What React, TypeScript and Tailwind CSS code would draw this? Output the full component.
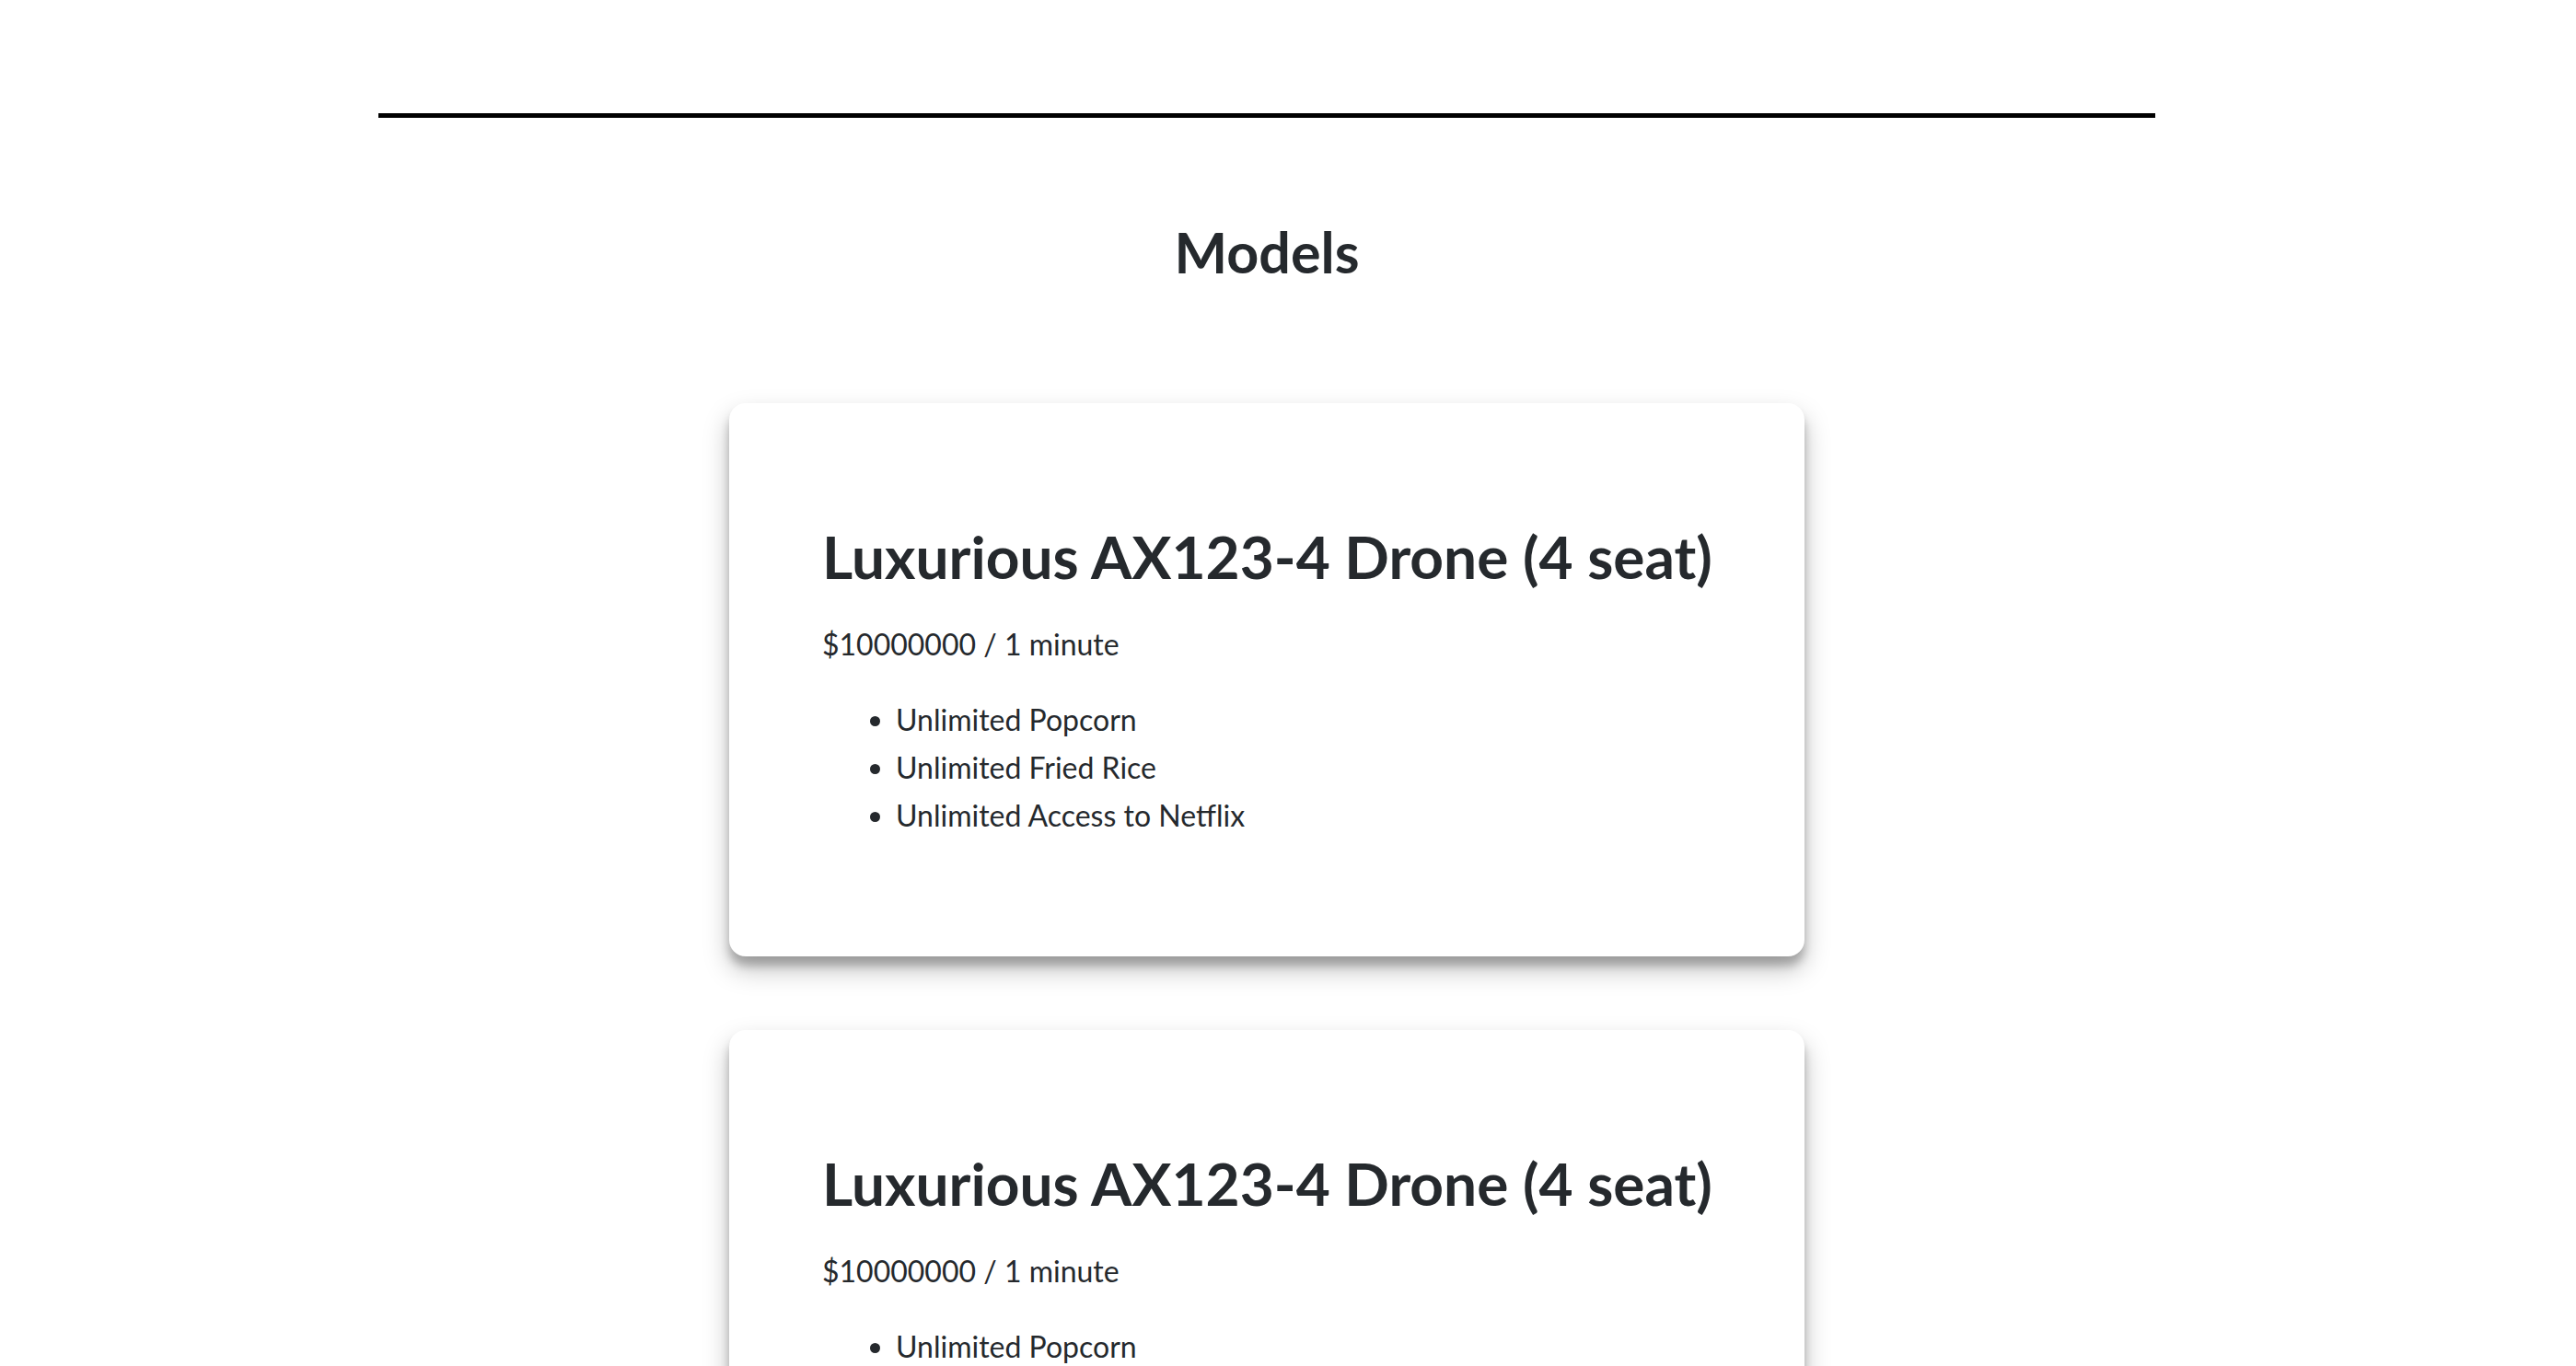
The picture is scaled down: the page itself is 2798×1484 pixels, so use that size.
const features = ["Unlimited Popcorn", "Unlimited Fried Rice", "Unlimited Access to Netflix"];

const models = [
  { name: "Luxurious AX123-4 Drone (4 seat)", price: "$10000000 / 1 minute" },
  { name: "Luxurious AX123-4 Drone (4 seat)", price: "$10000000 / 1 minute" },
];

const ModelCard = ({ name, price }: { name: string; price: string }) => (
  <div className="w-[1168px] rounded-[18px] bg-white pl-[101px] pr-[60px] pt-[135px] pb-[127px] shadow-[0_14px_28px_rgba(0,0,0,0.25),0_10px_10px_rgba(0,0,0,0.22)]">
    <h3 className="text-[64px] font-bold leading-none text-[#25292d]">{name}</h3>
    <p className="mt-[47px] text-[32px] leading-none text-[#25292d]">{price}</p>
    <ul className="mt-[40px] list-disc pl-[80px] text-[32px] leading-[52px] text-[#25292d]">
      {features.map((f) => (
        <li key={f}>{f}</li>
      ))}
    </ul>
  </div>
);

export default function App() {
  return (
    <div className="min-h-screen bg-white font-['Lato',sans-serif]">
      <div className="w-[2752px] pt-[123px] pb-[120px]">
        <hr className="mx-auto h-[5px] w-[1930px] border-0 bg-black" />
        <h2 className="mt-[115px] text-center text-[61px] font-bold leading-none text-[#25292d]">
          Models
        </h2>
        <div className="mt-[134px] flex flex-col items-center gap-[80px]">
          {models.map((m, i) => (
            <ModelCard key={i} name={m.name} price={m.price} />
          ))}
        </div>
      </div>
    </div>
  );
}
